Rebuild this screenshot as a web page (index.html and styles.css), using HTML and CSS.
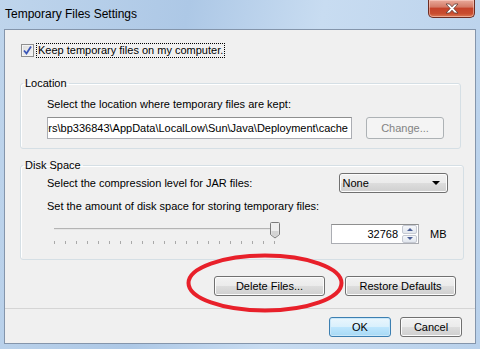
FILE: index.html
```html
<!DOCTYPE html>
<html lang="en">
<head>
  <meta charset="UTF-8">
  <title>Temporary Files Settings</title>
  <link rel="stylesheet" href="styles.css">
</head>
<body>
  <div class="window">
    <div class="titlebar">
      <span class="title">Temporary Files Settings</span>
      <span class="close">
        <svg width="14" height="11" viewBox="0 0 14 11">
          <path d="M1 1h3.5l2.5 2.8 2.5-2.8h3.5l-4.2 4.5 4.2 4.5h-3.5l-2.5-2.8-2.5 2.8h-3.5l4.2-4.5z" fill="#fff" stroke="#5a3a34" stroke-width="0.8"/>
        </svg>
      </span>
    </div>

    <div class="client">
      <div class="content">
        <div class="keep">
          <span class="checkbox">
            <svg width="11" height="11" viewBox="0 0 11 11">
              <path d="M2 5.5l2.5 3 4.5-7" fill="none" stroke="#3b56b8" stroke-width="1.8"/>
            </svg>
          </span>
          <span class="focus">Keep temporary files on my computer.</span>
        </div>

        <fieldset class="group location">
          <legend>Location</legend>
          <div class="text">Select the location where temporary files are kept:</div>
          <div class="field-row">
            <div class="path"><span>C:\Users\bp336843\AppData\LocalLow\Sun\Java\Deployment\cache</span></div>
            <button class="btn disabled change">Change...</button>
          </div>
        </fieldset>

        <fieldset class="group disk">
          <legend>Disk Space</legend>
          <div class="row">
            <span class="text">Select the compression level for JAR files:</span>
            <span class="select">None<i class="caret"></i></span>
          </div>
          <div class="text amount">Set the amount of disk space for storing temporary files:</div>
          <div class="slider-row">
            <svg class="slider" width="230" height="22" viewBox="0 0 230 22">
              <line x1="4" y1="6.5" x2="226" y2="6.5" stroke="#b4b4b4"/>
              <line x1="4" y1="7.5" x2="226" y2="7.5" stroke="#e6e6e6"/>
              <g stroke="#a9a9a9">
                <path d="M4.5 19v3M15.5 19v3M26.5 19v3M37.5 19v3M48.5 19v3M59.5 19v3M70.5 19v3M81.5 19v3M92.5 19v3M103.5 19v3M114.5 19v3M125.5 19v3M136.5 19v3M147.5 19v3M158.5 19v3M169.5 19v3M180.5 19v3M191.5 19v3M202.5 19v3M213.5 19v3M224.5 19v3"/>
              </g>
              <path d="M220.5 1.5a1 1 0 0 1 1-1h7a1 1 0 0 1 1 1v11l-4.5 3.5-4.5-3.5z" fill="#eeeeee" stroke="#7a7a7a"/>
              <path d="M221.5 9h7v3.5l-3.5 2.7-3.5-2.7z" fill="#d4d4d4"/>
            </svg>
            <div class="spinner">
              <span class="value">32768</span>
              <span class="spin">
                <span class="up"><i></i></span>
                <span class="down"><i></i></span>
              </span>
            </div>
            <span class="unit">MB</span>
          </div>
        </fieldset>

        <div class="actions">
          <button class="btn">Delete Files...</button>
          <button class="btn">Restore Defaults</button>
        </div>
      </div>

      <div class="footer">
        <button class="btn default">OK</button>
        <button class="btn">Cancel</button>
      </div>
    </div>

    <svg class="annotation" width="160" height="62" viewBox="0 0 160 62">
      <ellipse cx="79" cy="30" rx="76.5" ry="27.5" fill="none" stroke="#e8202a" stroke-width="4"/>
    </svg>
  </div>
</body>
</html>
```

FILE: styles.css
```css
html, body {
  margin: 0;
  padding: 0;
  width: 100%;
  height: 100%;
  overflow: hidden;
  font-family: "Liberation Sans", Arial, sans-serif;
  font-size: 11px;
  color: #000;
}

.window {
  position: relative;
  width: 480px;
  height: 349px;
  display: flex;
  flex-direction: column;
  background: linear-gradient(100deg, #bfd5ec 0%, #adc8e6 35%, #c8dcf1 60%, #b9d1eb 100%);
}

.titlebar {
  height: 29px;
  display: flex;
  align-items: flex-start;
  padding-left: 5px;
  flex-shrink: 0;
}

.title {
  font-size: 12px;
  line-height: 28px;
  color: #000;
}

.close {
  margin-left: auto;
  margin-right: 5px;
  width: 47px;
  height: 18px;
  box-sizing: border-box;
  border: 1px solid #6d2d23;
  border-top: none;
  border-radius: 0 0 5px 5px;
  background: linear-gradient(#e9a99a 0%, #d47c68 40%, #c5432a 50%, #c94d2f 80%, #dc7a55 100%);
  box-shadow: inset 0 0 0 1px rgba(255, 220, 210, 0.5);
  display: flex;
  align-items: center;
  justify-content: center;
}

.client {
  flex: 1;
  margin: 0 4px 5px 4px;
  border: 1px solid #8495ab;
  background: #f0f0f0;
  display: flex;
  flex-direction: column;
}

.content {
  padding: 0 14px 0 15px;
}

.keep {
  margin-top: 13px;
  display: flex;
  align-items: center;
  height: 15px;
}

.checkbox {
  width: 13px;
  height: 13px;
  box-sizing: border-box;
  margin-left: 1px;
  border: 1px solid #8f8f8f;
  background: linear-gradient(135deg, #dcdcdc, #f6f6f6);
  box-shadow: inset 0 0 0 1px #f4f4f4;
  display: flex;
  align-items: center;
  justify-content: center;
}

.focus {
  margin-left: 3px;
  padding: 0 1px;
  line-height: 13px;
  outline: 1px dotted #000;
}

.group {
  margin: 0;
  border: 1px solid #d5dfe5;
  border-radius: 3px;
  box-shadow: inset 1px 1px 0 #fff;
  padding: 0 16px 0 26px;
}

.group legend {
  padding: 0 2px;
  margin-left: -24px;
  line-height: 16px;
}

.location {
  margin-top: 17px;
  padding-top: 5px;
  padding-bottom: 9px;
}

.text {
  line-height: 16px;
}

.field-row {
  margin-top: 5px;
  display: flex;
}

.path {
  width: 305px;
  height: 22px;
  box-sizing: border-box;
  border: 1px solid #abadb3;
  border-top-color: #8e8f8f;
  background: #fff;
  overflow: hidden;
  display: flex;
  justify-content: flex-end;
  align-items: center;
  padding-right: 3px;
  white-space: nowrap;
}

.btn {
  font: inherit;
  color: #000;
  height: 20px;
  width: 111px;
  padding: 0;
  box-sizing: border-box;
  border: 1px solid #707070;
  border-radius: 3px;
  background: linear-gradient(#f2f2f2 0%, #ebebeb 50%, #dddddd 51%, #cfcfcf 100%);
  box-shadow: inset 0 0 0 1px #fcfcfc;
}

.change {
  width: 78px;
  height: 22px;
  margin-left: 14px;
}

.btn.disabled {
  color: #838383;
  border-color: #adb2b5;
  background: #f4f4f4;
  box-shadow: none;
}

.disk {
  margin-top: 8px;
  padding-top: 0;
  padding-bottom: 15px;
}

.row {
  display: flex;
  align-items: center;
  height: 20px;
}

.select {
  margin-left: auto;
  margin-right: -1px;
  width: 109px;
  height: 20px;
  box-sizing: border-box;
  border: 1px solid #707070;
  border-radius: 3px;
  background: linear-gradient(#f2f2f2 0%, #ebebeb 50%, #dddddd 51%, #cfcfcf 100%);
  box-shadow: inset 0 0 0 1px #fcfcfc;
  display: flex;
  align-items: center;
  padding: 0 7px 0 3px;
}

.caret {
  margin-left: auto;
  width: 0;
  height: 0;
  border-left: 4px solid transparent;
  border-right: 4px solid transparent;
  border-top: 4px solid #000;
}

.amount {
  margin-top: 5px;
}

.slider-row {
  margin-top: 8px;
  display: flex;
  align-items: flex-start;
  margin-left: -24px;
}

.slider {
  display: block;
  margin-left: 27px;
}

.spinner {
  margin-left: 51px;
  margin-top: 2px;
  width: 88px;
  height: 20px;
  box-sizing: border-box;
  border: 1px solid #abadb3;
  border-top-color: #8e8f8f;
  background: #fff;
  display: flex;
  align-items: center;
}

.value {
  flex: 1;
  text-align: right;
  padding-right: 4px;
}

.spin {
  width: 15px;
  height: 18px;
  display: flex;
  flex-direction: column;
  gap: 1px;
  margin-right: 1px;
}

.spin span {
  flex: 1;
  border: 1px solid #c5c9d2;
  border-radius: 2px;
  background: linear-gradient(#f5f7fa, #e1e6ee);
  display: flex;
  align-items: center;
  justify-content: center;
}

.spin i {
  width: 0;
  height: 0;
  border-left: 3px solid transparent;
  border-right: 3px solid transparent;
}

.up i {
  border-bottom: 3px solid #4a5e96;
}

.down i {
  border-top: 3px solid #4a5e96;
}

.unit {
  margin-left: 11px;
  margin-top: 2px;
  line-height: 20px;
}

.actions {
  margin-top: 16px;
  display: flex;
  justify-content: flex-end;
  gap: 20px;
  padding-right: 5px;
}

.footer {
  margin-top: 12px;
  border-top: 1px solid #d5d5d5;
  padding: 8px 13px 0 0;
  display: flex;
  justify-content: flex-end;
  gap: 9px;
}

.footer .btn {
  width: 62px;
}

.btn.default {
  border-color: #3c7fb1;
  background: linear-gradient(#eaf6fd 0%, #d9f0fc 50%, #bee6fd 51%, #a7d9f5 100%);
  box-shadow: inset 0 0 0 1px #c9e7f9;
}

.annotation {
  position: absolute;
  left: 186px;
  top: 253px;
}
```
